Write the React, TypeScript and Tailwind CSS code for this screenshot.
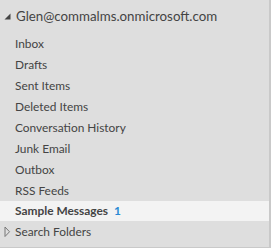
const folders = [
  'Inbox',
  'Drafts',
  'Sent Items',
  'Deleted Items',
  'Conversation History',
  'Junk Email',
  'Outbox',
  'RSS Feeds',
]

export default function App() {
  return (
    <div
      className="h-[248px] w-[271px] overflow-hidden border-r-2 border-b border-[#c9c9c9] bg-[#dedede] text-[#444444]"
      style={{ fontFamily: '"Segoe UI", Lato, "Open Sans", sans-serif' }}
    >
      <div className="flex h-[33px] items-center pt-[1px]">
        <svg width="16" height="32" viewBox="0 0 16 32" className="shrink-0">
          <polygon points="10.5,12.5 10.5,18.5 4.5,18.5" fill="#444444" />
        </svg>
        <span className="text-[13.3px] leading-none">Glen@commalms.onmicrosoft.com</span>
      </div>
      <div className="flex flex-col">
        {folders.map((f) => (
          <div key={f} className="flex h-[21px] items-center pl-[15px] text-[11.9px] leading-none">
            {f}
          </div>
        ))}
        <div className="flex h-[20px] items-center bg-[#f3f3f3] pl-[15px] text-[11.9px] leading-none">
          <span className="font-bold">Sample Messages</span>
          <span className="ml-[6px] font-bold text-[#2a8ad4]">1</span>
        </div>
        <div className="flex h-[21px] items-center text-[11.9px] leading-none">
          <svg width="15" height="21" viewBox="0 0 15 21" className="shrink-0">
            <polygon points="5,6 5,15.5 9.5,10.75" fill="none" stroke="#777777" strokeWidth="1" />
          </svg>
          <span>Search Folders</span>
        </div>
      </div>
    </div>
  )
}
